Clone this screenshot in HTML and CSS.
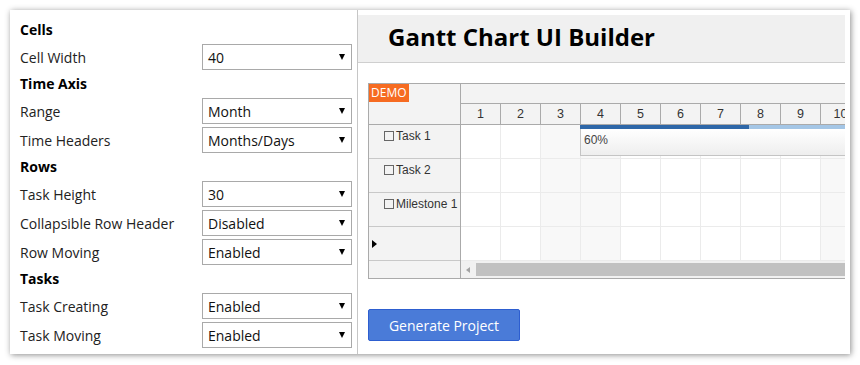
FILE: index.html
```html
<!DOCTYPE html>
<html>
<head>
<meta charset="utf-8">
<link rel="stylesheet" href="styles.css">
</head>
<body>
<div class="window">
  <div class="side">
    <div class="heading">Cells</div>
    <div class="row"><span class="label">Cell Width</span><div class="select"><span>40</span><i class="arrow"></i></div></div>
    <div class="heading">Time Axis</div>
    <div class="row"><span class="label">Range</span><div class="select"><span>Month</span><i class="arrow"></i></div></div>
    <div class="row"><span class="label">Time Headers</span><div class="select"><span>Months/Days</span><i class="arrow"></i></div></div>
    <div class="heading">Rows</div>
    <div class="row"><span class="label">Task Height</span><div class="select"><span>30</span><i class="arrow"></i></div></div>
    <div class="row"><span class="label">Collapsible Row Header</span><div class="select"><span>Disabled</span><i class="arrow"></i></div></div>
    <div class="row"><span class="label">Row Moving</span><div class="select"><span>Enabled</span><i class="arrow"></i></div></div>
    <div class="heading">Tasks</div>
    <div class="row"><span class="label">Task Creating</span><div class="select"><span>Enabled</span><i class="arrow"></i></div></div>
    <div class="row"><span class="label">Task Moving</span><div class="select"><span>Enabled</span><i class="arrow"></i></div></div>
  </div>
  <div class="main">
    <div class="title">Gantt Chart UI Builder</div>
    <div class="gantt">
      <div class="rowheaders">
        <div class="corner"><span class="demo">DEMO</span></div>
        <div class="rh"><span class="cb"></span>Task 1</div>
        <div class="rh"><span class="cb"></span>Task 2</div>
        <div class="rh"><span class="cb"></span>Milestone 1</div>
        <div class="rh rh-new"><i class="tri"></i></div>
        <div class="rh-scroll"></div>
      </div>
      <div class="timeline">
        <div class="th-top"></div>
        <div class="th-days">
          <div class="day">1</div><div class="day">2</div><div class="day">3</div><div class="day">4</div><div class="day">5</div><div class="day">6</div><div class="day">7</div><div class="day">8</div><div class="day">9</div><div class="day">10</div><div class="day">11</div><div class="day">12</div>
        </div>
        <div class="grid">
          <div class="grow"><div class="c"></div><div class="c"></div><div class="c we"></div><div class="c we"></div><div class="c"></div><div class="c"></div><div class="c"></div><div class="c"></div><div class="c"></div><div class="c we"></div><div class="c we"></div><div class="c"></div></div>
          <div class="grow"><div class="c"></div><div class="c"></div><div class="c we"></div><div class="c we"></div><div class="c"></div><div class="c"></div><div class="c"></div><div class="c"></div><div class="c"></div><div class="c we"></div><div class="c we"></div><div class="c"></div></div>
          <div class="grow"><div class="c"></div><div class="c"></div><div class="c we"></div><div class="c we"></div><div class="c"></div><div class="c"></div><div class="c"></div><div class="c"></div><div class="c"></div><div class="c we"></div><div class="c we"></div><div class="c"></div></div>
          <div class="grow"><div class="c"></div><div class="c"></div><div class="c we"></div><div class="c we"></div><div class="c"></div><div class="c"></div><div class="c"></div><div class="c"></div><div class="c"></div><div class="c we"></div><div class="c we"></div><div class="c"></div></div>
          <div class="task">
            <div class="progress"><div class="done" style="width:60%"></div></div>
            <div class="task-body">60%</div>
          </div>
        </div>
        <div class="hscroll"><i class="larrow"></i><div class="thumb"></div></div>
      </div>
    </div>
    <button class="btn">Generate Project</button>
  </div>
</div>
</body>
</html>
```

FILE: styles.css
```css
html, body {
  margin: 0;
  padding: 0;
  background: #fff;
}
body {
  font-family: "Open Sans", "Liberation Sans", sans-serif;
}
.window {
  margin: 10px;
  width: 840px;
  height: 344px;
  background: #fff;
  box-shadow: 1px 1px 6px rgba(0, 0, 0, 0.45);
  display: flex;
  overflow: hidden;
}
.side {
  flex: 0 0 348px;
  box-sizing: border-box;
  padding: 9px 0 0 10px;
  border-right: 1px solid #c6c6c6;
  font-size: 14px;
  color: #222;
}
.heading {
  height: 22px;
  line-height: 22px;
  margin-bottom: 3px;
  font-weight: bold;
  color: #000;
}
.row {
  display: flex;
  align-items: center;
  height: 26px;
  margin-bottom: 3px;
}
.label {
  flex: 0 0 182px;
  white-space: nowrap;
}
.select {
  flex: 0 0 150px;
  height: 26px;
  box-sizing: border-box;
  border: 1px solid #a9a9a9;
  padding: 1px 6px 0 5px;
  display: flex;
  align-items: center;
  justify-content: space-between;
  color: #111;
}
.arrow {
  width: 0;
  height: 0;
  border-left: 3.5px solid transparent;
  border-right: 3.5px solid transparent;
  border-top: 6px solid #000;
  margin-top: -1px;
}
.main {
  flex: 0 0 487px;
  overflow: hidden;
  padding-top: 5px;
  box-sizing: border-box;
}
.title {
  height: 48px;
  background: #f0f0f0;
  border-bottom: 1px solid #cfcfcf;
  box-sizing: border-box;
  padding-left: 30px;
  font-size: 24px;
  font-weight: bold;
  line-height: 44px;
  color: #000;
  white-space: nowrap;
}
.gantt {
  margin: 20px 0 0 10px;
  width: 700px;
  border: 1px solid #aaa;
  display: flex;
  font-family: "Liberation Sans", "DejaVu Sans", sans-serif;
  font-size: 12px;
  color: #333;
}
.rowheaders {
  flex: 0 0 91px;
  border-right: 1px solid #aaa;
  background: #f3f3f3;
}
.corner {
  height: 40px;
  border-bottom: 1px solid #aaa;
}
.demo {
  display: inline-block;
  background: #f66b21;
  color: #fff;
  font-family: "Open Sans", "Liberation Sans", sans-serif;
  font-size: 12px;
  line-height: 18px;
  height: 18px;
  padding: 0 2px;
}
.rh {
  height: 29px;
  padding: 4px 0 0 15px;
  border-bottom: 1px solid #c8c8c8;
  line-height: 14px;
  display: flex;
  align-items: flex-start;
  font-size: 12px;
  white-space: nowrap;
}
.cb {
  width: 8px;
  height: 8px;
  border: 1px solid #666;
  margin: 2px 2px 0 0;
  flex: 0 0 auto;
}
.rh-new {
  height: 33px;
  padding: 0 0 0 3px;
  align-items: center;
}
.tri {
  width: 0;
  height: 0;
  border-top: 4px solid transparent;
  border-bottom: 4px solid transparent;
  border-left: 5px solid #000;
}
.rh-scroll {
  height: 17px;
}
.timeline {
  flex: 1;
  display: flex;
  flex-direction: column;
}
.th-top {
  height: 19px;
  background: #f3f3f3;
  border-bottom: 1px solid #aaa;
}
.th-days {
  display: flex;
  height: 20px;
  background: #f3f3f3;
  border-bottom: 1px solid #aaa;
}
.day {
  flex: 0 0 39px;
  border-right: 1px solid #aaa;
  text-align: center;
  line-height: 20px;
  font-size: 12.5px;
  color: #333;
}
.grid {
  position: relative;
}
.grow {
  display: flex;
  height: 33px;
  border-bottom: 1px solid #ebebeb;
}
.c {
  flex: 0 0 39px;
  border-right: 1px solid #ebebeb;
  background: #fff;
}
.c.we {
  background: #f8f8f8;
}
.task {
  position: absolute;
  left: 119px;
  top: 0;
  width: 282px;
}
.progress {
  height: 4px;
  background: #a4c6e6;
}
.done {
  height: 100%;
  background: #2e67a8;
}
.task-body {
  height: 27px;
  box-sizing: border-box;
  border: 1px solid #c4c4c4;
  border-top: none;
  background: linear-gradient(#ffffff, #eeeeee);
  padding-left: 3px;
  line-height: 22px;
  color: #444;
}
.hscroll {
  height: 17px;
  background: #f1f1f1;
  display: flex;
  align-items: center;
}
.larrow {
  width: 0;
  height: 0;
  border-top: 3px solid transparent;
  border-bottom: 3px solid transparent;
  border-right: 4px solid #a3a3a3;
  margin: 0 6px 0 5px;
}
.thumb {
  flex: 1;
  height: 13px;
  background: #c1c1c1;
}
.btn {
  display: block;
  margin: 30px 0 0 10px;
  width: 152px;
  height: 32px;
  background: #4a7bd8;
  border: 1px solid #2d5ed0;
  border-radius: 2px;
  color: #fff;
  font-family: "Open Sans", "Liberation Sans", sans-serif;
  font-size: 14px;
  padding: 0;
}
```
